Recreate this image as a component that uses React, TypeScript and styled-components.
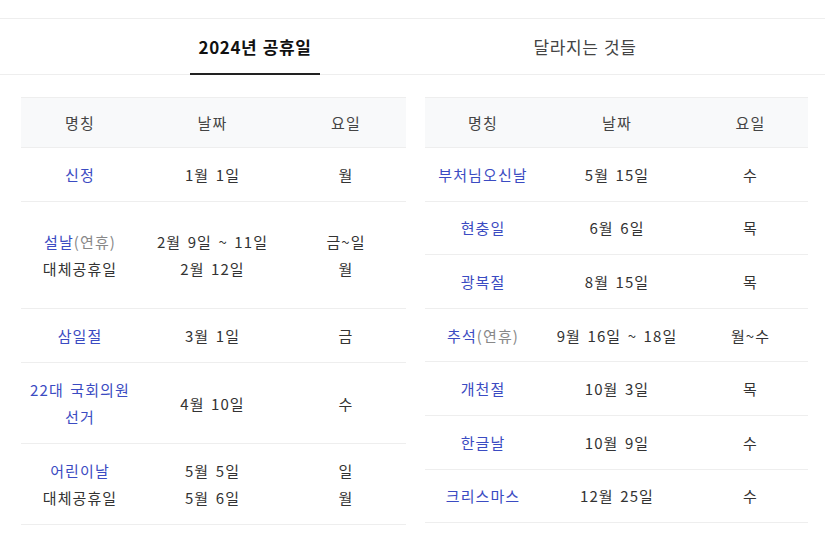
import React from "react";
import styled, { createGlobalStyle } from "styled-components";

const Global = createGlobalStyle`
  html, body { margin: 0; padding: 0; background: #fff; }
  body { font-family: "Noto Sans CJK KR", "Noto Sans", sans-serif; color: #333; }
`;

const Page = styled.div`
  width: 825px;
  padding-top: 18px;
`;

const TabBar = styled.div`
  display: flex;
  justify-content: center;
  padding-left: 15px;
  height: 55px;
  border-top: 1px solid #eeeeee;
  border-bottom: 1px solid #eeeeee;
`;

const Tab = styled.div`
  width: 330px;
  display: flex;
  justify-content: center;
`;

const TabLabel = styled.span<{ $active?: boolean }>`
  display: flex;
  align-items: center;
  padding: 0 ${(p) => (p.$active ? 9 : 12)}px;
  margin-bottom: -1px;
  font-size: 17px;
  letter-spacing: 0.6px;
  word-spacing: 1px;
  font-weight: ${(p) => (p.$active ? 700 : 400)};
  color: ${(p) => (p.$active ? "#111" : "#444")};
  border-bottom: 2px solid ${(p) => (p.$active ? "#222" : "transparent")};
`;

const Tables = styled.div`
  display: grid;
  grid-template-columns: 385px 383px;
  column-gap: 19px;
  padding: 22px 0 0 21px;
  align-items: start;
`;

const Table = styled.table<{ $compact?: boolean }>`
  width: 100%;
  border-collapse: collapse;
  table-layout: fixed;
  font-size: 15px;
  letter-spacing: 1.1px;
  word-spacing: 2px;
  text-align: center;
  --pad: ${(p) => (p.$compact ? "12.8px" : "13px")};
`;

const Th = styled.th`
  height: 49px;
  padding: 0;
  font-weight: 400;
  color: #444;
  background: #f8f9fa;
  border-top: 1px solid #eeeeee;
  border-bottom: 1px solid #eeeeee;
`;

const Td = styled.td<{ $tall?: boolean }>`
  padding: ${(p) => (p.$tall ? "26px 0" : "var(--pad) 0")};
  line-height: 27px;
  color: #333;
  border-bottom: 1px solid #eeeeee;
  vertical-align: middle;
`;

const Name = styled.span`
  color: #3b4bc2;
`;

const Muted = styled.span`
  color: #888;
`;

type Row = { name: React.ReactNode; date: React.ReactNode; day: React.ReactNode; tall?: boolean };

const left: Row[] = [
  { name: <Name>신정</Name>, date: "1월 1일", day: "월" },
  {
    name: (
      <>
        <Name>설날</Name>
        <Muted>(연휴)</Muted>
        <br />
        대체공휴일
      </>
    ),
    date: (
      <>
        2월 9일 ~ 11일
        <br />
        2월 12일
      </>
    ),
    day: (
      <>
        금~일
        <br />월
      </>
    ),
    tall: true,
  },
  { name: <Name>삼일절</Name>, date: "3월 1일", day: "금" },
  {
    name: (
      <Name>
        22대 국회의원
        <br />
        선거
      </Name>
    ),
    date: "4월 10일",
    day: "수",
  },
  {
    name: (
      <>
        <Name>어린이날</Name>
        <br />
        대체공휴일
      </>
    ),
    date: (
      <>
        5월 5일
        <br />
        5월 6일
      </>
    ),
    day: (
      <>
        일
        <br />월
      </>
    ),
  },
];

const right: Row[] = [
  { name: <Name>부처님오신날</Name>, date: "5월 15일", day: "수" },
  { name: <Name>현충일</Name>, date: "6월 6일", day: "목" },
  { name: <Name>광복절</Name>, date: "8월 15일", day: "목" },
  {
    name: (
      <>
        <Name>추석</Name>
        <Muted>(연휴)</Muted>
      </>
    ),
    date: "9월 16일 ~ 18일",
    day: "월~수",
  },
  { name: <Name>개천절</Name>, date: "10월 3일", day: "목" },
  { name: <Name>한글날</Name>, date: "10월 9일", day: "수" },
  { name: <Name>크리스마스</Name>, date: "12월 25일", day: "수" },
];

function HolidayTable({ rows, widths, compact }: { rows: Row[]; widths: number[]; compact?: boolean }) {
  return (
    <Table $compact={compact}>
      <colgroup>
        {widths.map((w, i) => (
          <col key={i} style={{ width: w }} />
        ))}
      </colgroup>
      <thead>
        <tr>
          <Th>명칭</Th>
          <Th>날짜</Th>
          <Th>요일</Th>
        </tr>
      </thead>
      <tbody>
        {rows.map((r, i) => (
          <tr key={i}>
            <Td $tall={r.tall}>{r.name}</Td>
            <Td $tall={r.tall}>{r.date}</Td>
            <Td $tall={r.tall}>{r.day}</Td>
          </tr>
        ))}
      </tbody>
    </Table>
  );
}

export default function App() {
  return (
    <Page>
      <Global />
      <TabBar>
        <Tab>
          <TabLabel $active>2024년 공휴일</TabLabel>
        </Tab>
        <Tab>
          <TabLabel>달라지는 것들</TabLabel>
        </Tab>
      </TabBar>
      <Tables>
        <HolidayTable rows={left} widths={[118, 147, 120]} />
        <HolidayTable rows={right} widths={[116, 152, 115]} compact />
      </Tables>
    </Page>
  );
}
